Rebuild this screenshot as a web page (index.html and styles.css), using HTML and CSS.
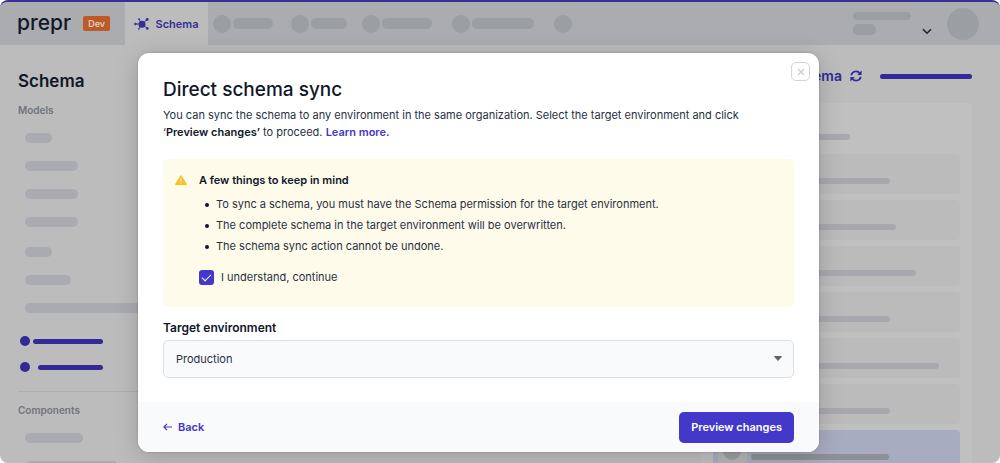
FILE: index.html
```html
<!DOCTYPE html>
<html lang="en">
<head>
<meta charset="utf-8">
<title>Direct schema sync</title>
<meta name="viewport" content="width=device-width, initial-scale=1">
<link rel="stylesheet" href="styles.css">
</head>
<body>
<div class="app">
  <header class="topbar">
    <div class="brand">
      <span class="logo">prepr</span>
      <span class="env-tag">Dev</span>
    </div>
    <nav class="tabs">
      <a class="tab-active" href="#">
        <svg class="schema-icon" viewBox="0 0 15 12" aria-hidden="true">
          <g stroke="currentColor" stroke-width="1" fill="none"><path d="M1.500 6H8M8 6L5 1.500M8 6l5-4.500M8 6l5 4.200M8 6l-3 4.500"/></g>
          <g fill="currentColor"><circle cx="8" cy="6.200" r="3.500"/><circle cx="1.400" cy="6" r="1.300"/><circle cx="5" cy="1.200" r=".900"/><circle cx="13.200" cy="1.500" r="1.400"/><circle cx="13.300" cy="10.400" r="1.300"/><circle cx="4.800" cy="10.900" r=".800"/></g>
        </svg>
        Schema
      </a>
      <span class="ghost-tab"><i class="dot"></i><i class="pill w40"></i></span>
      <span class="ghost-tab"><i class="dot"></i><i class="pill w36"></i></span>
      <span class="ghost-tab ghost-near"><i class="dot"></i><i class="pill w50"></i></span>
      <span class="ghost-tab ghost-far"><i class="dot"></i><i class="pill w62"></i></span>
      <span class="ghost-tab ghost-far"><i class="dot"></i></span>
    </nav>
    <div class="account">
      <div class="account-name"><i class="line"></i><i class="line short"></i></div>
      <svg class="chevron" viewBox="0 0 10 7" aria-hidden="true"><path d="M1 1.200l4 4 4-4" fill="none" stroke="currentColor" stroke-width="1.600"/></svg>
      <i class="avatar"></i>
    </div>
  </header>

  <div class="workspace">
    <aside class="sidebar">
      <h1 class="side-title">Schema</h1>
      <h2 class="side-label">Models</h2>
      <div class="bars">
        <i class="bar w27"></i><i class="bar w53"></i><i class="bar w53"></i><i class="bar w53"></i>
      </div>
      <div class="bars bars-more">
        <i class="bar w27"></i><i class="bar w46"></i><i class="bar w140"></i>
      </div>
      <div class="actions">
        <span class="action"><i class="bullet"></i><i class="rule"></i></span>
        <span class="action action-inset"><i class="bullet"></i><i class="rule"></i></span>
      </div>
      <h2 class="side-label divided">Components</h2>
      <div class="bars">
        <i class="bar w58"></i><i class="bar w93"></i>
      </div>
    </aside>
    <section class="main">
      <div class="sync-row">
        <a class="sync-link" href="#">Sync schema
          <svg class="refresh" viewBox="0 0 12 12" aria-hidden="true"><g fill="none" stroke="currentColor" stroke-width="1.700"><path d="M1.200 5.200A4.900 4.900 0 0 1 10 3.500M10.800 6.800A4.900 4.900 0 0 1 2 8.500"/></g><path d="M11.600.600v4.500H7.100zM.400 11.400V6.900h4.500z" fill="currentColor"/></svg>
        </a>
        <i class="sync-rule"></i>
      </div>
      <div class="panel">
        <div class="panel-head"><i class="row-line w137"></i></div>
        <div class="row"><i class="row-line w138"></i></div>
        <div class="row"><i class="row-line w144"></i></div>
        <div class="row"><i class="row-line w164"></i></div>
        <div class="row"><i class="row-line w138"></i></div>
        <div class="row row-low"><i class="row-line w187"></i></div>
        <div class="row"><i class="row-line w138"></i></div>
        <div class="row row-selected"><span class="thumb"><i class="dot"></i></span><i class="row-line w138"></i></div>
      </div>
    </section>
  </div>

  <div class="overlay">
    <div class="modal" role="dialog" aria-labelledby="dialog-title">
      <button class="close" type="button" aria-label="Close">
        <svg viewBox="0 0 8 8" aria-hidden="true"><path d="M1 1l6 6M7 1L1 7" stroke="currentColor" stroke-width="1.200"/></svg>
      </button>
      <div class="modal-body">
        <h2 class="title" id="dialog-title">Direct schema sync</h2>
        <p class="intro">You can sync the schema to any environment in the same organization. Select the target environment and click ‘<b>Preview changes’</b> to proceed. <a href="#">Learn more.</a></p>
        <div class="notice">
          <svg class="warning" viewBox="0 0 12 10" aria-hidden="true"><path d="M6 .800L11.300 9.400H.700z" fill="#fbbf24" stroke="#fbbf24" stroke-width="1.200" stroke-linejoin="round"/><path d="M6 3.200v3.200M6 7.400v1.200" stroke="#fff" stroke-width="1.100"/></svg>
          <div class="notice-text">
            <h3 class="notice-title">A few things to keep in mind</h3>
            <ul class="notice-list">
              <li>To sync a schema, you must have the Schema permission for the target environment.</li>
              <li>The complete schema in the target environment will be overwritten.</li>
              <li>The schema sync action cannot be undone.</li>
            </ul>
            <label class="agree"><input type="checkbox" checked>I understand, continue</label>
          </div>
        </div>
        <label class="field-label" for="target">Target environment</label>
        <div class="select-wrap">
          <select id="target"><option>Production</option></select>
          <svg class="caret" viewBox="0 0 8 5" aria-hidden="true"><path d="M.500.500h7L4 4.500z" fill="currentColor" stroke="currentColor" stroke-linejoin="round"/></svg>
        </div>
      </div>
      <footer class="modal-foot">
        <a class="back" href="#"><svg viewBox="0 0 9 8" aria-hidden="true"><path d="M9 4H1M4 .800L.900 4 4 7.200" fill="none" stroke="currentColor" stroke-width="1.200"/></svg>Back</a>
        <button class="primary" type="button">Preview changes</button>
      </footer>
    </div>
  </div>
</div>
</body>
</html>
```
FILE: styles.css
```css
* { box-sizing: border-box; }
body { margin: 0; background: #fff; color: #0f172a; font-family: Inter, "Liberation Sans", sans-serif; font-size: 11px; }
h1, h2, h3, p, ul { margin: 0; padding: 0; }
a { text-decoration: none; color: #4338ca; }
i { display: block; flex: none; }
svg { display: block; flex: none; }

.app { position: relative; height: 100vh; overflow: hidden; display: flex; flex-direction: column; background: #bcbcbc; border-top: 2px solid #372e98; border-radius: 8px; }

.topbar { flex: none; display: flex; height: 43px; background: #aaacb0; }
.brand { width: 125px; padding-left: 17px; display: flex; align-items: center; gap: 12px; }
.logo { font-size: 21px; line-height: 24px; font-weight: 500; color: #111827; padding-bottom: 2px; }
.env-tag { padding: 0 5px; background: #bf5a28; color: #d8d0cc; font-size: 9px; line-height: 15px; font-weight: 600; border-radius: 2px; }
.tabs { display: flex; align-items: center; flex: 1; }
.tab-active { align-self: stretch; width: 83px; display: flex; align-items: center; justify-content: center; gap: 6px; background: #bcbcbc; color: #372e98; font-weight: 600; }
.schema-icon { width: 15px; height: 12px; }
.ghost-tab { display: flex; align-items: center; gap: 2px; margin-left: 5px; }
.ghost-tab + .ghost-tab { margin-left: 18px; }
.ghost-tab + .ghost-near { margin-left: 15px; }
.ghost-tab + .ghost-far { margin-left: 20px; }
.dot { width: 18px; height: 18px; border-radius: 50%; background: #9b9ea2; }
.pill { height: 11px; border-radius: 6px; background: #9b9ea2; }
.w40 { width: 40px; } .w36 { width: 36px; } .w50 { width: 50px; } .w62 { width: 62px; }
.account { display: flex; align-items: center; padding-right: 21px; }
.account-name { width: 69px; display: flex; flex-direction: column; gap: 4px; }
.line { width: 58px; height: 8px; border-radius: 5px; background: #9b9ea2; }
.line.short { width: 23px; height: 11px; }
.chevron { width: 10px; height: 7px; margin: 16px 15px 0 0; color: #20242e; }
.avatar { width: 32px; height: 32px; border-radius: 50%; background: #9b9ea2; }

.workspace { flex: 1; min-height: 0; display: flex; justify-content: space-between; }
.sidebar { width: 190px; padding: 25px 0 0 18px; }
.side-title { font-size: 17px; line-height: 22px; font-weight: 600; color: #10172a; }
.side-label { margin-top: 11px; font-size: 10px; line-height: 14px; font-weight: 600; color: #71757f; }
.divided { margin-top: 19px; padding-top: 11px; border-top: 1px solid #adaeb1; }
.bars { display: flex; flex-direction: column; gap: 18px; margin: 16px 0 0 7px; }
.bars-more { margin-top: 20px; }
.bar { height: 10px; border-radius: 5px; background: #a9abb0; }
.w27 { width: 27px; } .w53 { width: 53px; } .w46 { width: 46px; } .w140 { width: 140px; } .w58 { width: 58px; } .w93 { width: 93px; }
.actions { display: flex; flex-direction: column; gap: 16px; margin: 23px 0 0 2px; width: 83px; }
.action { display: flex; align-items: center; gap: 3px; }
.action-inset { gap: 8px; }
.bullet { width: 10px; height: 10px; border-radius: 50%; background: #332a98; }
.rule { flex: 1; height: 5px; border-radius: 3px; background: #332a98; }

.main { width: 271px; margin-right: 28px; display: flex; flex-direction: column; }
.sync-row { flex: none; padding-top: 20px; height: 58px; display: flex; align-items: flex-start; justify-content: flex-end; gap: 18px; }
.sync-link { display: flex; align-items: center; gap: 8px; color: #332a98; font-size: 14px; line-height: 22px; font-weight: 600; }
.refresh { width: 12px; height: 12px; }
.sync-rule { width: 92px; height: 5px; margin-top: 9px; border-radius: 3px; background: #332a98; }
.panel { flex: 1; min-height: 0; padding: 0 12px; display: flex; flex-direction: column; gap: 6px; background: #c0c0c0; border-radius: 4px 4px 0 0; }
.panel-head { flex: none; height: 45px; padding-top: 31px; }
.row { flex: none; height: 40px; padding: 24px 0 0 39px; border-radius: 4px; background: #bbb; }
.row-low { padding-top: 25px; }
.row-line { height: 6px; border-radius: 3px; background: #a7a9ae; }
.w137 { width: 137px; } .w138 { width: 138px; } .w144 { width: 144px; } .w164 { width: 164px; } .w187 { width: 187px; }
.row-selected { padding: 0 0 0 5px; display: flex; align-items: flex-start; gap: 4px; background: #a8acc0; }
.row-selected .row-line { margin-top: 24px; background: #8e9096; }
.thumb { width: 29px; height: 40px; padding: 12px 5px; background: #b5b5b7; }

.overlay { position: absolute; inset: 0; padding: 51px 181px 11px 138px; display: flex; }
.modal { position: relative; flex: 1; display: flex; flex-direction: column; justify-content: space-between; background: #fff; border-radius: 11px; box-shadow: 0 4px 24px rgba(0, 0, 0, .18), 0 0 2px rgba(0, 0, 0, .25); }
.close { position: absolute; top: 9px; right: 9px; width: 19px; height: 19px; padding: 0; display: grid; place-items: center; background: #fff; border: 1px solid #d1d5e0; border-radius: 5px; color: #c5cad6; }
.close svg { width: 8px; height: 8px; }
.modal-body { padding: 25px 25px 0; }
.title { font-size: 19px; line-height: 24px; font-weight: 500; color: #0f172a; }
.intro { margin-top: 5px; max-width: 590px; font-size: 11px; line-height: 17px; color: #283044; }
.intro b { font-weight: 600; color: #0f172a; }
.intro a { font-weight: 600; }
.notice { margin-top: 18px; padding: 12px 13px 21px 12px; display: flex; gap: 12px; background: #fffbea; border-radius: 5px; }
.warning { width: 12px; height: 10px; margin-top: 4px; }
.notice-title { font-size: 11px; line-height: 18px; font-weight: 600; }
.notice-list { margin-top: 5px; padding-left: 6px; list-style: none; line-height: 21px; color: #283044; }
.notice-list li { display: flex; align-items: center; gap: 7px; }
.notice-list li::before { content: ""; width: 4px; height: 4px; border-radius: 50%; background: #0f172a; }
.agree { margin-top: 12px; display: flex; align-items: center; gap: 7px; line-height: 17px; color: #283044; }
.agree input { appearance: none; margin: 0; width: 15px; height: 15px; display: grid; place-items: center; background: #4338ca; border-radius: 3px; }
.agree input::before { content: ""; width: 8px; height: 4px; margin-top: -2px; border: solid #fff; border-width: 0 0 1px 1px; transform: rotate(-45deg); }
.agree input:not(:checked) { background: #fff; border: 1px solid #cbd5e1; }
.field-label { display: block; margin-top: 12px; font-size: 12px; line-height: 18px; font-weight: 600; }
.select-wrap { position: relative; margin-top: 3px; }
.select-wrap select { appearance: none; display: block; width: 100%; height: 38px; padding: 0 32px 0 12px; font: inherit; color: #283044; background: #f8fafc; border: 1px solid #dcdfe5; border-radius: 5px; }
.caret { position: absolute; right: 12px; top: 16px; width: 8px; height: 5px; color: #5b6472; pointer-events: none; }
.modal-foot { height: 50px; padding: 0 25px; display: flex; align-items: center; justify-content: space-between; background: #f8fafc; border-radius: 0 0 11px 11px; }
.back { display: flex; align-items: center; gap: 6px; font-weight: 600; }
.back svg { width: 9px; height: 8px; }
.primary { height: 31px; padding: 0 12px; border: 0; border-radius: 5px; background: #4338ca; color: #fff; font: inherit; font-weight: 600; }
```
